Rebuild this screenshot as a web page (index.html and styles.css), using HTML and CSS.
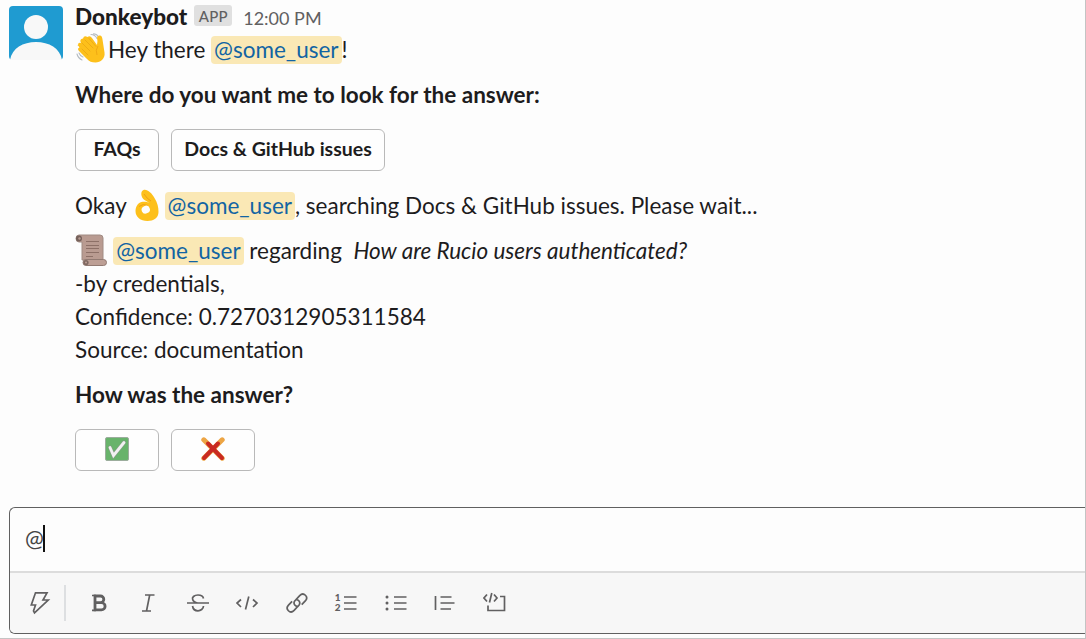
FILE: index.html
```html
<!DOCTYPE html>
<html lang="en">
<head>
<meta charset="utf-8">
<title>Donkeybot</title>
<link rel="stylesheet" href="styles.css">
</head>
<body>
<div class="window">
  <main class="message">
    <svg class="avatar" viewBox="0 0 54 54">
      <rect width="54" height="54" rx="4" fill="#1f9bd1"/>
      <circle cx="27" cy="21" r="12" fill="#f8f8f8"/>
      <path d="M1 54C3 42 14 36 27 36s24 6 26 18z" fill="#f8f8f8"/>
    </svg>
    <div class="content">
      <header class="meta">
        <span class="name">Donkeybot</span><span class="badge">APP</span><span class="time">12:00 PM</span>
      </header>
      <p class="line"><svg class="emoji wave" viewBox="0 0 33 33">
        <g fill="none" stroke="#b5bcc2" stroke-width="1.1" stroke-linecap="round"><path d="M16 1.500q4 0 6 4M18.500.8q3 0 5 3M2 21q1 4 5 6M4 20q1 3 4 4"/></g>
        <path d="M3 12q0-3 3-2Q4 6 8 5.500 9 2 12.500 4 15 2 17 5l5 7q1-4 0-7 0-3 3-2.500 2 0 2.500 4l2 13c1 6-4 10-9 10-4 0-6-1-9-4l-7-7q-3-3 0-4l-1-1.500q-1.500-.5-.5-1.500z" fill="#fdc01b"/>
        <path d="M7 10l8 8M10 7l8 8M14 5.500l7 8M7 16l6 6" fill="none" stroke="#eda914" stroke-width=".9" stroke-linecap="round"/>
        <path d="M23 13q-3 4-1 9" fill="none" stroke="#f0a914" stroke-width="1"/>
      </svg><span>Hey there <b class="mention">@some_user</b>!</span></p>
      <p class="line strong">Where do you want me to look for the answer:</p>
      <div class="actions">
        <button class="button">FAQs</button>
        <button class="button wide">Docs &amp; GitHub issues</button>
      </div>
      <p class="line"><span>Okay </span><svg class="emoji ok" viewBox="0 0 33 33">
        <path d="M11.500 1c4-1 8 3 11 8 3 5 4 9 4 14 0 6-5 9-11 9-7 0-12-4-12-10 0-4 2-8 6-9 3-.7 6 0 8 1l-5-3C9 9 8 2 11.500 1z" fill="#fdc01b"/>
        <path d="M12 5q3 5 7 7M7 17.500q4-3.500 9-1" fill="none" stroke="#f0a016" stroke-width="1"/>
        <ellipse cx="13.500" cy="20.500" rx="4.200" ry="3.800" fill="#fdfdfd" transform="rotate(-25 14 20)"/>
      </svg><span><b class="mention">@some_user</b>, searching Docs &amp; GitHub issues. Please wait...</span></p>
      <div class="answer">
        <p class="line"><svg class="emoji scroll" viewBox="0 0 33 33">
          <path d="M4 1h21q3 0 3 3v22H7V8H4Q1 8 1 4.500T4 1z" fill="#b99b91" stroke="#a08b83"/>
          <circle cx="4" cy="4.500" r="3" fill="#75615b"/><circle cx="4.500" cy="4.500" r="1.200" fill="#b99b91"/>
          <path d="M11 7.500h13M11 11.500h13M11 14.500h13M11 18.500h13M11 22.500h7" stroke="#8d7067" stroke-width="1"/>
          <rect x="8" y="25.500" width="23.500" height="6" rx="3" fill="#bd9f95" stroke="#927a72"/>
          <circle cx="11" cy="28.500" r="2.600" fill="#7e6861"/><circle cx="11" cy="28.500" r="1" fill="#bd9f95"/>
        </svg><span><b class="mention">@some_user</b> regarding &nbsp;<i>How are Rucio users authenticated?</i></span></p>
        <p class="line">-by credentials,</p>
        <p class="line">Confidence: 0.7270312905311584</p>
        <p class="line">Source: documentation</p>
      </div>
      <p class="line strong">How was the answer?</p>
      <div class="actions">
        <button class="button" aria-label="Yes"><svg class="mark" viewBox="0 0 24 24">
          <rect x=".5" y=".5" width="23" height="23" rx="1.500" fill="#68b36b" stroke="#9cad9d"/>
          <path d="M5 10.500l3.500 8L19 5.500" fill="none" stroke="#8b9b8c" stroke-width="3.800" stroke-linecap="round"/>
          <path d="M5 10.500l3.500 8L19 5.500" fill="none" stroke="#f1f1f1" stroke-width="2.800" stroke-linecap="round"/>
        </svg></button>
        <button class="button" aria-label="No"><svg class="mark" viewBox="0 0 24 24">
          <path d="M2.800 2.800l18.400 18.400M21.200 2.800L2.800 21.200" stroke="#eda544" stroke-width="5" stroke-linecap="round"/>
          <path d="M7 6.500l14 14.500M17 6.500L3 21" stroke="#c92a22" stroke-width="4" stroke-linecap="round"/>
        </svg></button>
      </div>
    </div>
  </main>
  <section class="composer">
    <div class="input"><span>@</span><span class="caret"></span></div>
    <div class="toolbar">
      <svg class="tool bolt" viewBox="0 0 24 24"><path d="M8.500 1.800h11.500l-4 7.200h5.200L7.500 21.800 6.500 20l2-6H4.300z"/></svg>
      <span class="rule"></span>
      <svg class="tool" viewBox="0 0 24 24"><path class="heavy" d="M8 5h5.500a3.200 3.200 0 0 1 0 6.600H8zM8 11.600h6.500a3.600 3.600 0 0 1 0 7.200H8z"/><path d="M5 4.500h4M5 19.300h4"/></svg>
      <svg class="tool" viewBox="0 0 24 24"><path d="M9 4h9.500M6 20h9M13.700 4l-3.200 16"/></svg>
      <svg class="tool" viewBox="0 0 24 24"><path d="M1 12h22M17.500 7.500C17 5 14.500 4 12 4c-4 0-6.300 2.500-5.300 4.500 .5 2 2.500 3 5 3.500M6.500 15c.5 3 3 4.800 5.500 4.800s5.500-1.800 5.500-4.800"/></svg>
      <svg class="tool" viewBox="0 0 24 24"><path d="M6 8.500L2 12l4 4M18 8.500l4 3.500-4 4M13.800 5.500L10.500 18.500"/></svg>
      <svg class="tool" viewBox="0 0 24 24"><path d="M13.500 15.300c-3 .9-5.700-2.500-3.800-5.300l5-5.400c4-4 9.300 1.300 5.600 5.200l-3.600 3.800M10.300 8.700c3-.9 5.700 2.500 3.800 5.300l-5 5.400c-4 4-9.300-1.300-5.600-5.200l3.600-3.800"/></svg>
      <svg class="tool" viewBox="0 0 24 24"><path d="M10 6h12.500M10 12h12.500M10 18h12.500"/><text class="digit" x=".8" y="10">1</text><text class="digit" x=".8" y="20">2</text></svg>
      <svg class="tool" viewBox="0 0 24 24"><path d="M10 6h12.500M10 12h12.500M10 18h12.500"/><path class="dots" d="M3 6h.01M3 12h.01M3 18h.01"/></svg>
      <svg class="tool" viewBox="0 0 24 24"><path d="M2.500 5v14M7.500 6h11M7.500 12h14M7.500 18h10.500"/></svg>
      <svg class="tool" viewBox="0 0 24 24"><path d="M4 3.500L1 7l3 3.500M11 3.500l3 3.500-3 3.500M8.800 2L6.500 11.500M17 5.500h4.500v14h-16.500v-5"/></svg>
    </div>
  </section>
</div>
</body>
</html>
```

FILE: styles.css
```css
* { box-sizing: border-box; }
body { margin: 0; }
.window {
  width: 1086px;
  height: 639px;
  overflow: hidden;
  background: #fdfdfd;
  border-right: 1px solid #c4c4c4;
  border-bottom: 1px solid #c4c4c4;
  font-family: Lato, "Liberation Sans", sans-serif;
  font-size: 22.5px;
  line-height: 33px;
  color: #1d1c1d;
  display: flex;
  flex-direction: column;
}
.message { height: 507px; padding: 0 9px; display: flex; gap: 12px; }
.avatar { width: 54px; height: 54px; margin-top: 6px; flex: none; }
.content { display: flex; flex-direction: column; gap: 12px; white-space: nowrap; }
.meta { height: 33px; margin-bottom: -12px; display: flex; align-items: center; }
.name { font-weight: 900; }
.badge {
  height: 21px;
  margin: -2px 0 0 7px;
  padding: 0 4.5px;
  border-radius: 3px;
  background: #e0e0e0;
  color: #616061;
  font-size: 15px;
  font-weight: 500;
  letter-spacing: 0.2px;
  line-height: 22px;
}
.time { margin: 3px 0 0 11px; color: #616061; font-size: 18px; }
.line { margin: 0; height: 33px; display: flex; white-space: pre; }
.strong { font-weight: 700; }
.mention {
  padding: 0 3px 1px;
  border-radius: 4px;
  background: #fae8b5;
  color: #1264a3;
  font-weight: 400;
}
.emoji { width: 33px; height: 33px; flex: none; }
.ok { margin-right: -0.4px; }
.scroll { margin-right: 5.2px; }
.actions { display: flex; gap: 12px; margin-top: 6px; margin-bottom: 6px; }
.button {
  width: 84px;
  height: 42px;
  padding: 0 0 3px;
  display: flex;
  align-items: center;
  justify-content: center;
  border: 1px solid #b9b9b9;
  border-radius: 6px;
  background: #fefefe;
  color: #1d1c1d;
  font: 700 19.5px/33px Lato, sans-serif;
}
.wide { width: 214px; }
.mark { width: 24px; height: 24px; margin-top: 1px; }
.composer {
  height: 127px;
  margin-left: 9px;
  border: 1px solid #606060;
  border-right: 0;
  border-radius: 6px 0 0 6px;
  overflow: hidden;
}
.input { height: 63px; padding: 0 0 2px 15px; display: flex; align-items: center; color: #454545; }
.caret { width: 2px; height: 27px; margin-left: -1px; background: #111; }
.toolbar {
  height: 62px;
  padding-left: 17px;
  border-top: 2px solid #dcdcdc;
  background: #f7f7f7;
  display: flex;
  align-items: center;
  gap: 25.500px;
}
.tool { width: 24px; height: 24px; flex: none; fill: none; stroke: #616061; stroke-width: 1.7; }
.rule { width: 1.5px; height: 36px; margin: 0 -4.5px 0 -12.5px; background: #dddfe1; }
.heavy { stroke-width: 2.8; }
.dots { stroke-width: 3; stroke-linecap: round; }
.digit { font: 900 10px Lato, sans-serif; fill: #616061; stroke: none; }
```
